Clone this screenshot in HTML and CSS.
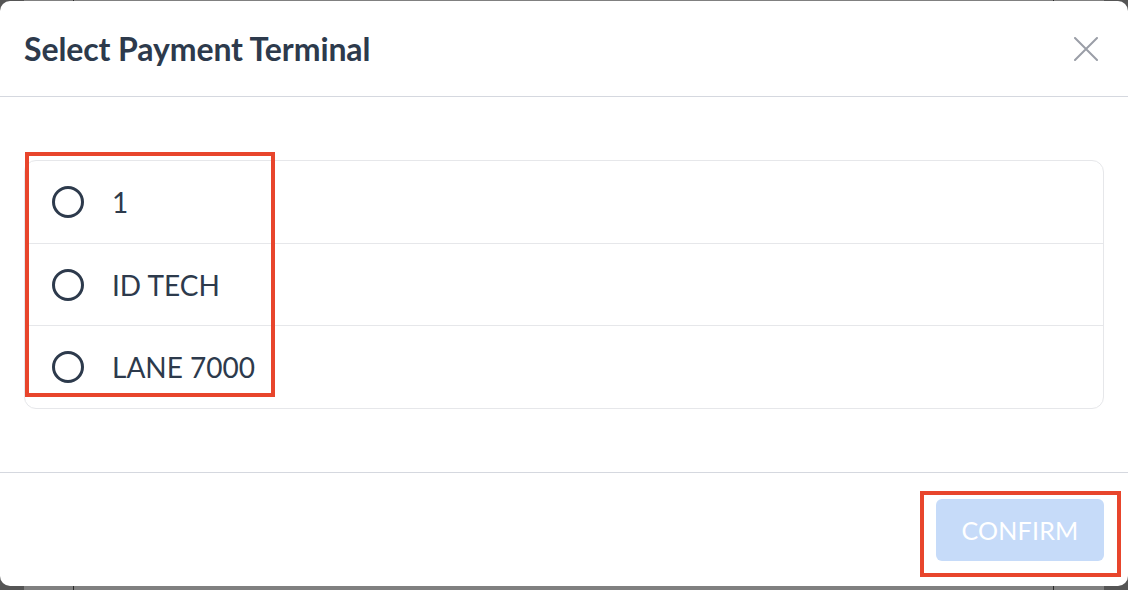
FILE: index.html
```html
<!DOCTYPE html>
<html lang="en">
<head>
<meta charset="utf-8">
<title>Select Payment Terminal</title>
<link rel="stylesheet" href="styles.css">
</head>
<body>
<div class="backdrop"></div>
<div class="modal">
  <header class="modal-header">
    <h1 class="modal-title">Select Payment Terminal</h1>
    <button class="close-btn" aria-label="Close">
      <svg width="24" height="24" viewBox="0 0 24 24"><path d="M1 1 L23 23 M23 1 L1 23" stroke="#9a9ea7" stroke-width="2" fill="none" stroke-linecap="round"/></svg>
    </button>
  </header>
  <section class="modal-body">
    <ul class="option-list">
      <li class="option"><span class="radio"></span><span class="option-label">1</span></li>
      <li class="option"><span class="radio"></span><span class="option-label">ID TECH</span></li>
      <li class="option"><span class="radio"></span><span class="option-label">LANE 7000</span></li>
    </ul>
  </section>
  <footer class="modal-footer">
    <button class="confirm-btn" disabled>CONFIRM</button>
  </footer>
  <div class="annot annot-list"></div>
  <div class="annot annot-btn"></div>
</div>
</body>
</html>
```

FILE: styles.css
```css
html, body {
  margin: 0;
  padding: 0;
}
body {
  width: 1128px;
  height: 590px;
  overflow: hidden;
  background: #7f7f7f;
  font-family: Lato, "Open Sans", sans-serif;
  position: relative;
}
.backdrop {
  position: absolute;
  left: 0;
  top: 0;
  width: 1128px;
  height: 590px;
  background:
    linear-gradient(to right, transparent 73px, #2a2a2a 73px, #2a2a2a 74px, transparent 74px, transparent 1053px, #2a2a2a 1053px, #2a2a2a 1054px, transparent 1054px),
    linear-gradient(to right, #555 0, #555 24px, #808080 24px, #808080 1104px, #555 1104px);
}
.modal {
  position: relative;
  margin-top: 1px;
  width: 1128px;
  height: 585px;
  background: #fff;
  border-radius: 10px;
  display: flex;
  flex-direction: column;
  box-sizing: border-box;
}
.modal-header {
  height: 96px;
  box-sizing: border-box;
  border-bottom: 1px solid #d5d8df;
  display: flex;
  align-items: center;
  justify-content: space-between;
  padding: 0 30px 0 24px;
}
.modal-title {
  margin: 0;
  font-family: Lato, sans-serif;
  font-weight: 700;
  font-size: 32px;
  color: #2d3a4c;
  letter-spacing: -0.1px;
}
.close-btn {
  border: 0;
  background: none;
  padding: 0;
  width: 24px;
  height: 24px;
  display: flex;
}
.modal-body {
  padding: 63px 24px 63px 24px;
  border-bottom: 1px solid #d5d8df;
}
.option-list {
  list-style: none;
  margin: 0;
  padding: 0;
  border: 1px solid #e6e7ea;
  border-radius: 12px;
}
.option {
  height: 82px;
  display: flex;
  align-items: center;
  padding-left: 27px;
  border-top: 1px solid #e6e7ea;
}
.option:first-child {
  border-top: 0;
}
.option:nth-child(2) {
  height: 81px;
}
.radio {
  width: 32px;
  height: 32px;
  box-sizing: border-box;
  border: 3px solid #2d3a4c;
  border-radius: 50%;
  margin-right: 28px;
  flex: none;
}
.option-label {
  font-size: 28px;
  color: #2d3a4c;
}
.modal-footer {
  flex: 1;
  display: flex;
  justify-content: flex-end;
  align-items: flex-start;
  padding: 26px 24px 0 0;
}
.confirm-btn {
  width: 168px;
  height: 62px;
  border: 0;
  border-radius: 6px;
  background: #c6dbf9;
  color: #fff;
  font-family: Lato, sans-serif;
  font-size: 25px;
  letter-spacing: 0.2px;
  padding: 0;
}
.annot {
  position: absolute;
  border: 4px solid #e8452c;
  box-sizing: border-box;
}
.annot-list {
  left: 25px;
  top: 151px;
  width: 250px;
  height: 245px;
}
.annot-btn {
  left: 920px;
  top: 490px;
  width: 201px;
  height: 86px;
}
```
